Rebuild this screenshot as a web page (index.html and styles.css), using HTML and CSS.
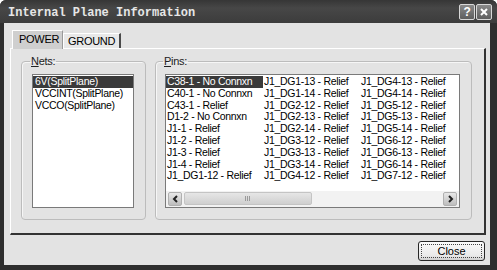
FILE: index.html
```html
<!DOCTYPE html>
<html>
<head>
    <title>Internal Plane Information</title>
    <meta charset="utf-8">
    <link rel="stylesheet" href="styles.css">
</head>
<body>
    <div class="window">
        <div class="titlebar">
            <span class="title">Internal Plane Information</span>
            <div class="caption-btns">
                <span class="cbtn">?</span>
                <span class="cbtn">
                    <svg width="10" height="10" viewBox="0 0 10 10"><path d="M2 2 L8 8 M8 2 L2 8" stroke="#fff" stroke-width="2"/></svg>
                </span>
            </div>
        </div>

        <div class="client">
            <div class="tabs">
                <div class="tab active">POWER</div>
                <div class="tab">GROUND</div>
            </div>

            <div class="panel">
                <fieldset class="group nets">
                    <legend><u>N</u>ets:</legend>
                    <div class="listbox nets-list">
                        <div class="item sel">6V(SplitPlane)</div>
                        <div class="item">VCCINT(SplitPlane)</div>
                        <div class="item">VCCO(SplitPlane)</div>
                    </div>
                </fieldset>

                <fieldset class="group pins">
                    <legend><u>P</u>ins:</legend>
                    <div class="listbox pins-list">
                        <div class="cols">
                            <div class="item sel">C38-1 - No Connxn</div>
                            <div class="item">C40-1 - No Connxn</div>
                            <div class="item">C43-1 - Relief</div>
                            <div class="item">D1-2 - No Connxn</div>
                            <div class="item">J1-1 - Relief</div>
                            <div class="item">J1-2 - Relief</div>
                            <div class="item">J1-3 - Relief</div>
                            <div class="item">J1-4 - Relief</div>
                            <div class="item">J1_DG1-12 - Relief</div>

                            <div class="item">J1_DG1-13 - Relief</div>
                            <div class="item">J1_DG1-14 - Relief</div>
                            <div class="item">J1_DG2-12 - Relief</div>
                            <div class="item">J1_DG2-13 - Relief</div>
                            <div class="item">J1_DG2-14 - Relief</div>
                            <div class="item">J1_DG3-12 - Relief</div>
                            <div class="item">J1_DG3-13 - Relief</div>
                            <div class="item">J1_DG3-14 - Relief</div>
                            <div class="item">J1_DG4-12 - Relief</div>

                            <div class="item">J1_DG4-13 - Relief</div>
                            <div class="item">J1_DG4-14 - Relief</div>
                            <div class="item">J1_DG5-12 - Relief</div>
                            <div class="item">J1_DG5-13 - Relief</div>
                            <div class="item">J1_DG5-14 - Relief</div>
                            <div class="item">J1_DG6-12 - Relief</div>
                            <div class="item">J1_DG6-13 - Relief</div>
                            <div class="item">J1_DG6-14 - Relief</div>
                            <div class="item">J1_DG7-12 - Relief</div>
                        </div>
                        <div class="hscroll">
                            <span class="sbtn">
                                <svg width="7" height="8" viewBox="0 0 7 8"><path d="M5 1 L2 4 L5 7" stroke="#222" stroke-width="2" fill="none"/></svg>
                            </span>
                            <div class="track">
                                <div class="thumb"><span class="grip"></span></div>
                            </div>
                            <span class="sbtn">
                                <svg width="7" height="8" viewBox="0 0 7 8"><path d="M2 1 L5 4 L2 7" stroke="#222" stroke-width="2" fill="none"/></svg>
                            </span>
                        </div>
                    </div>
                </fieldset>
            </div>

            <div class="footer">
                <button class="btn">Close</button>
            </div>
        </div>
    </div>
</body>
</html>
```

FILE: styles.css
```css
body {
    margin: 0;
    background-color: #fff;
}
.window {
    width: 497px;
    height: 270px;
    display: flex;
    flex-direction: column;
    background-color: #2e2e2e;
    border-radius: 6px 6px 0 0;
    font-family: "Liberation Sans", Arial, sans-serif;
    font-size: 10.5px;
    letter-spacing: -0.3px;
    color: #000;
}
.titlebar {
    height: 23px;
    display: flex;
    align-items: center;
    padding: 0 5px 0 8px;
    background: linear-gradient(#363636, #474747 35%, #3c3c3c);
    border-radius: 6px 6px 0 0;
}
.title {
    flex: 1;
    font-family: "Liberation Mono", "Courier New", monospace;
    font-weight: bold;
    font-size: 12px;
    letter-spacing: 0;
    color: #e6e6e6;
    padding-top: 2px;
}
.caption-btns {
    display: flex;
    gap: 1px;
}
.cbtn {
    width: 14px;
    height: 14px;
    display: flex;
    align-items: center;
    justify-content: center;
    border: 1px solid #d8d8d8;
    border-radius: 2px;
    background: linear-gradient(#8a8a8a, #5e5e5e);
    color: #fff;
    font-size: 12px;
    font-weight: bold;
}
.client {
    flex: 1;
    margin: 0 7px 5px 4px;
    padding: 7px 0 0 6px;
    background-color: #e3e3e3;
    display: flex;
    flex-direction: column;
}
.tabs {
    display: flex;
    align-items: flex-end;
    height: 18px;
    margin-left: 2px;
    position: relative;
    z-index: 1;
}
.tab {
    height: 15px;
    box-sizing: border-box;
    padding: 1px 4px 0 4px;
    border-top: 1px solid #fff;
    border-left: 1px solid #fff;
    border-right: 2px solid #4a4a4a;
    background-color: #e8e8e8;
    font-size: 11px;
    line-height: 13px;
}
.tab.active {
    height: 19px;
    margin-bottom: -1px;
    width: 51px;
    padding: 2px 0 0 6px;
    background-color: #cfcfcf;
    border-right: 1px solid #9a9a9a;
}
.panel {
    width: 476px;
    height: 187px;
    box-sizing: border-box;
    border-top: 1px solid #fff;
    border-left: 1px solid #fff;
    border-right: 2px solid #333;
    border-bottom: 2px solid #333;
    padding: 6px 0 0 10px;
    display: flex;
    align-items: flex-start;
    gap: 9px;
}
.group {
    margin: 0;
    min-width: 0;
    box-sizing: border-box;
    border: 1px solid #bcbcbc;
    border-radius: 4px;
    box-shadow: inset 1px 1px 0 #f6f6f6;
    padding: 7px 11px 11px 10px;
}
.group legend {
    padding: 0 1px;
    margin-left: -2px;
    font-size: 11px;
    line-height: 12px;
    color: #222;
}
.nets {
    width: 125px;
}
.pins {
    width: 317px;
    padding-left: 9px;
}
.listbox {
    height: 134px;
    box-sizing: border-box;
    border: 1px solid #7a7a7a;
    background-color: #fff;
    overflow: hidden;
}
.nets-list {
    width: 102px;
    padding-top: 1px;
}
.pins-list {
    width: 295px;
    display: flex;
    flex-direction: column;
}
.item {
    line-height: 11.8px;
    padding-left: 2px;
    white-space: nowrap;
    overflow: hidden;
}
.item.sel {
    background-color: #3a3a3a;
    color: #fff;
}
.cols {
    flex: 1;
    display: grid;
    grid-auto-flow: column;
    grid-template-rows: repeat(9, 11.8px);
    grid-template-columns: repeat(3, 97px);
    padding-top: 1px;
}
.cols .item {
    padding-left: 1px;
}
.hscroll {
    height: 15px;
    display: flex;
    align-items: center;
    gap: 2px;
    padding: 0 2px 1px 2px;
    background-color: #f2f2f2;
}
.sbtn {
    width: 12px;
    height: 12px;
    display: flex;
    align-items: center;
    justify-content: center;
    border: 1px solid #b0b0b0;
    border-radius: 2px;
    background: linear-gradient(#e8e8e8, #bdbdbd);
}
.track {
    flex: 1;
    height: 13px;
}
.thumb {
    width: 128px;
    height: 13px;
    box-sizing: border-box;
    border: 1px solid #c4c4c4;
    border-radius: 2px;
    background: linear-gradient(#e6e6e6, #cfcfcf);
    display: flex;
    align-items: center;
    justify-content: center;
}
.grip {
    width: 6px;
    height: 5px;
    background: repeating-linear-gradient(90deg, #9a9a9a 0 1px, transparent 1px 2px);
}
.footer {
    display: flex;
    justify-content: flex-end;
    padding: 6px 5px 0 0;
}
.btn {
    width: 67px;
    height: 20px;
    border: 1px solid #262626;
    border-radius: 3px;
    background: linear-gradient(#fbfbfb, #e9e9e9 75%, #cfcfcf);
    font-family: "Liberation Sans", Arial, sans-serif;
    font-size: 11px;
    color: #000;
    outline: 1px dotted #444;
    outline-offset: -4px;
    padding: 0;
}
```
